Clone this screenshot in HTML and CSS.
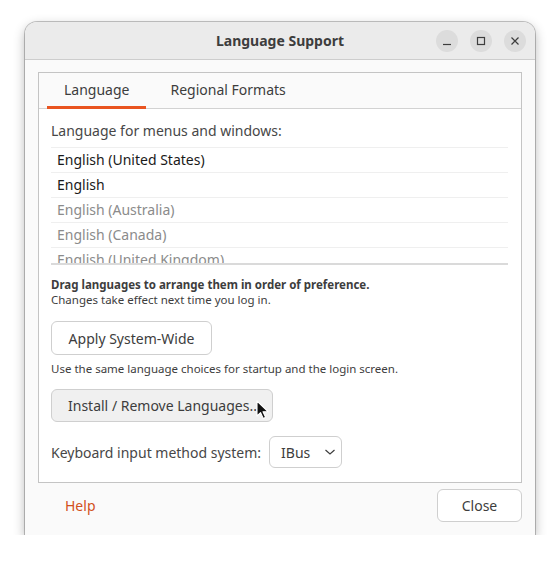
FILE: index.html
```html
<!DOCTYPE html>
<html lang="en">
<head>
<meta charset="utf-8">
<title>Language Support</title>
<link rel="stylesheet" href="styles.css">
</head>
<body>
<div class="window">
  <header class="titlebar">
    <div></div>
    <div class="title">Language Support</div>
    <div class="controls">
      <span class="wbtn"><svg width="22" height="22" viewBox="0 0 22 22"><path d="M7 14.5h8" stroke="#3d3d3d" stroke-width="1.2" fill="none"/></svg></span>
      <span class="wbtn"><svg width="22" height="22" viewBox="0 0 22 22"><rect x="7.5" y="7.5" width="7" height="7" stroke="#3d3d3d" stroke-width="1.2" fill="none"/></svg></span>
      <span class="wbtn"><svg width="22" height="22" viewBox="0 0 22 22"><path d="M7.5 7.5l7 7M14.5 7.5l-7 7" stroke="#3d3d3d" stroke-width="1.2" fill="none"/></svg></span>
    </div>
  </header>
  <main class="content">
    <div class="notebook">
      <div class="tabs">
        <div class="tab active">Language</div>
        <div class="tab">Regional Formats</div>
      </div>
      <div class="page">
        <div class="label">Language for menus and windows:</div>
        <div class="list">
          <div class="row">English (United States)</div>
          <div class="row">English</div>
          <div class="row dim">English (Australia)</div>
          <div class="row dim">English (Canada)</div>
          <div class="row dim">English (United Kingdom)</div>
        </div>
        <div class="hint">
          <div class="bold">Drag languages to arrange them in order of preference.</div>
          <div>Changes take effect next time you log in.</div>
        </div>
        <button class="btn apply">Apply System-Wide</button>
        <div class="small note">Use the same language choices for startup and the login screen.</div>
        <div class="install-wrap">
          <button class="btn install">Install / Remove Languages...</button>
          <svg class="cursor" width="14" height="20" viewBox="0 0 14 20"><path d="M1 1v15l3.6-3.4 2.6 5.8 2.4-1.1-2.6-5.6H12z" fill="#111" stroke="#fff" stroke-width="1.1" stroke-linejoin="round"/></svg>
        </div>
        <div class="kbd">
          <span>Keyboard input method system:</span>
          <button class="combo">IBus <svg width="12" height="8" viewBox="0 0 12 8"><path d="M1.5 2l4.5 4 4.5-4" stroke="#3d3d3d" stroke-width="1.2" fill="none"/></svg></button>
        </div>
      </div>
    </div>
  </main>
  <footer class="footer">
    <button class="flat">Help</button>
    <button class="btn close">Close</button>
  </footer>
</div>
</body>
</html>
```
FILE: styles.css
```css
* { box-sizing: border-box; }
html, body { margin: 0; padding: 0; background: #ffffff; }
body {
  font-family: "Noto Sans", "Open Sans", "DejaVu Sans", sans-serif;
  color: #3d3d3d;
  font-size: 14px;
}
.window {
  margin: 22px 0 0 25px;
  width: 510px;
  height: 513px;
  background: #fafafa;
  border-radius: 12px 12px 0 0;
  box-shadow: 0 0 0 1px rgba(0,0,0,0.22), 0 4px 12px rgba(0,0,0,0.3);
  display: flex;
  flex-direction: column;
}
.titlebar {
  height: 38px;
  flex: none;
  background: #ebebeb;
  border-bottom: 1px solid #cdcdcd;
  border-radius: 12px 12px 0 0;
  display: grid;
  grid-template-columns: 1fr auto 1fr;
  align-items: center;
}
.title {
  font-weight: bold;
  font-size: 14px;
  color: #3d3d3d;
}
.controls {
  display: flex;
  justify-content: flex-end;
  gap: 12px;
  padding-right: 9px;
}
.wbtn {
  width: 22px;
  height: 22px;
  border-radius: 50%;
  background: #dcdcdc;
  display: block;
}
.wbtn svg { display: block; }
.content {
  padding: 12px 13px 0 13px;
  flex: none;
}
.notebook {
  height: 411px;
  border: 1px solid #c4c4c4;
  background: #ffffff;
  display: flex;
  flex-direction: column;
}
.tabs {
  height: 36px;
  flex: none;
  background: #fafafa;
  border-bottom: 1px solid #d2d2d2;
  display: flex;
  gap: 6px;
  padding-left: 8px;
}
.tab {
  padding: 0 18px;
  line-height: 34px;
  color: #3d3d3d;
  border-bottom: 3px solid transparent;
  margin-bottom: -1px;
}
.tab.active { border-bottom-color: #e95420; padding: 0 17px; }
.page {
  padding: 12px 13px 0 12px;
  flex: 1;
}
.label { line-height: 20px; color: #474747; }
.list {
  margin-top: 6px;
  height: 118px;
  overflow: hidden;
  border-bottom: 2px solid #dadada;
}
.row {
  height: 25px;
  line-height: 24px;
  border-top: 1px solid #efefef;
  padding-left: 6px;
  color: #1a1a1a;
}
.row.dim { color: #8b8b8b; }
.hint {
  margin-top: 12px;
  font-size: 11.5px;
  line-height: 15px;
  color: #3d3d3d;
}
.bold { font-weight: bold; }
.btn {
  font-family: inherit;
  font-size: 14px;
  color: #3d3d3d;
  background: #ffffff;
  border: 1px solid #cfcfcf;
  border-radius: 6px;
  padding: 0 16px;
  height: 34px;
  display: block;
  white-space: nowrap;
}
.apply { margin-top: 14px; width: 161px; }
.small { font-size: 11.5px; line-height: 15px; }
.note { margin-top: 6px; color: #3d3d3d; }
.install-wrap { position: relative; margin-top: 13px; }
.install { width: 222px; height: 33px; background: #f0f0f0; text-align: left; padding: 0 0 0 16px; }
.cursor { position: absolute; left: 205px; top: 11px; }
.kbd {
  margin-top: 14px;
  display: flex;
  align-items: center;
  gap: 8px;
  color: #474747;
}
.combo {
  font-family: inherit;
  font-size: 14px;
  color: #3d3d3d;
  background: #ffffff;
  border: 1px solid #cfcfcf;
  border-radius: 6px;
  height: 32px;
  width: 73px;
  padding: 0 0 0 11px;
  display: flex;
  align-items: center;
  gap: 14px;
}
.footer {
  flex: 1;
  display: flex;
  justify-content: space-between;
  align-items: flex-start;
  padding: 6px 13px 0 40px;
}
.flat {
  font-family: inherit;
  font-size: 14px;
  background: none;
  border: none;
  color: #d2501c;
  padding: 0;
  height: 33px;
}
.close { width: 85px; height: 33px; padding: 0; }
```
